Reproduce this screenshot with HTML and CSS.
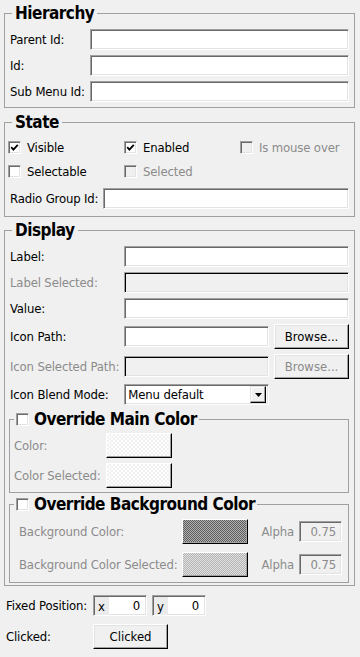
FILE: index.html
```html
<!DOCTYPE html>
<html lang="en">
<head>
    <meta charset="UTF-8">
    <meta name="viewport" content="width=device-width, initial-scale=1.0">
    <title>Menu Item Properties</title>
    <link rel="stylesheet" href="styles.css">
</head>
<body>
    <div class="panel">
        <fieldset class="group hierarchy">
            <legend>Hierarchy</legend>
            <div class="fields">
                <label>Parent Id:</label><input class="field" type="text">
                <label>Id:</label><input class="field" type="text">
                <label>Sub Menu Id:</label><input class="field" type="text">
            </div>
        </fieldset>

        <fieldset class="group state">
            <legend>State</legend>
            <div class="checks">
                <label class="check"><span class="box"><svg width="9" height="9" viewBox="0 0 9 9"><path d="M1.2 4.2 3.4 6.6 7.8 1.8" fill="none" stroke="#000" stroke-width="1.8"/></svg></span>Visible</label>
                <label class="check"><span class="box"><svg width="9" height="9" viewBox="0 0 9 9"><path d="M1.2 4.2 3.4 6.6 7.8 1.8" fill="none" stroke="#000" stroke-width="1.8"/></svg></span>Enabled</label>
                <label class="check dim"><span class="box off"></span>Is mouse over</label>
                <label class="check"><span class="box"></span>Selectable</label>
                <label class="check dim"><span class="box off"></span>Selected</label>
            </div>
            <div class="fields radio">
                <label>Radio Group Id:</label><input class="field" type="text">
            </div>
        </fieldset>

        <fieldset class="group display">
            <legend>Display</legend>
            <div class="fields display-fields">
                <label>Label:</label><input class="field wide" type="text">
                <label class="dim">Label Selected:</label><input class="field wide" type="text" disabled>
                <label>Value:</label><input class="field wide" type="text">
                <label>Icon Path:</label><input class="field" type="text"><button class="btn">Browse...</button>
                <label class="dim">Icon Selected Path:</label><input class="field" type="text" disabled><button class="btn" disabled>Browse...</button>
                <label>Icon Blend Mode:</label>
                <div class="select">
                    <span class="select-text">Menu default</span>
                    <span class="arrow"><svg width="7" height="4" viewBox="0 0 7 4"><path d="M0 0h7L3.5 4z" fill="#000"/></svg></span>
                </div>
            </div>

            <fieldset class="sub main-color">
                <legend><span class="box"></span>Override Main Color</legend>
                <div class="swatches">
                    <span class="dim">Color:</span><span class="swatch light"></span>
                    <span class="dim">Color Selected:</span><span class="swatch light"></span>
                </div>
            </fieldset>

            <fieldset class="sub bg-color">
                <legend><span class="box"></span>Override Background Color</legend>
                <div class="swatches alpha-rows">
                    <span class="dim">Background Color:</span><span class="swatch dark"></span>
                    <span class="dim">Alpha</span><span class="alpha">0.75</span>
                    <span class="dim">Background Color Selected:</span><span class="swatch mid"></span>
                    <span class="dim">Alpha</span><span class="alpha">0.75</span>
                </div>
            </fieldset>
        </fieldset>

        <div class="footer">
            <span>Fixed Position:</span>
            <div class="coords">
                <div class="coord"><span class="axis">x</span><span class="num">0</span></div>
                <div class="coord"><span class="axis">y</span><span class="num">0</span></div>
            </div>
            <span>Clicked:</span>
            <button class="btn">Clicked</button>
        </div>
    </div>
</body>
</html>
```

FILE: styles.css
```css
body {
    margin: 0;
    background: #f0f0f0;
    color: #000;
    font-family: "DejaVu Sans Condensed", "DejaVu Sans", sans-serif;
    font-size: 13px;
    letter-spacing: -0.15px;
}

.panel {
    width: 360px;
    padding-top: 4px;
    white-space: nowrap;
}

.group {
    margin: 0 5px 0 4px;
    padding: 0 5px 5px;
    border: 1px solid #a0a0a0;
    min-width: 0;
}

.group + .group {
    margin-top: 5px;
}

.group.display {
    margin-top: 4px;
    padding-bottom: 2px;
}

legend {
    display: flex;
    align-items: center;
    gap: 5px;
    margin-left: 2px;
    padding: 0 3px;
    font-size: 17px;
    font-weight: bold;
    line-height: 18px;
    letter-spacing: -0.5px;
}

.fields {
    display: grid;
    grid-template-columns: auto 1fr;
    column-gap: 5px;
    row-gap: 5px;
    align-items: center;
    padding-top: 7px;
}

.field {
    box-sizing: border-box;
    width: 100%;
    height: 21px;
    margin: 0;
    padding: 0 3px;
    border: 1px solid;
    border-color: #a0a0a0 #fff #fff #a0a0a0;
    box-shadow: inset 1px 1px #696969, inset -1px -1px #e3e3e3;
    background: #fff;
    font: inherit;
    outline: none;
}

.field:disabled {
    background: #f0f0f0;
    box-shadow: inset 1px 1px #000, inset -1px -1px #e3e3e3;
}

.dim {
    color: #8b8b8b;
}

/* state */
.state {
    padding-bottom: 7px;
}

.checks {
    display: grid;
    grid-template-columns: 116px 116px auto;
    grid-auto-rows: 22px;
    row-gap: 2px;
    align-items: center;
    margin-left: -2px;
    padding-top: 5px;
}

.check {
    display: flex;
    align-items: center;
    gap: 6px;
}

.box {
    box-sizing: border-box;
    display: flex;
    align-items: center;
    justify-content: center;
    width: 13px;
    height: 13px;
    flex: none;
    border: 1px solid;
    border-color: #a0a0a0 #fff #fff #a0a0a0;
    box-shadow: inset 1px 1px #696969, inset -1px -1px #e3e3e3;
    background: #fff;
}

.box.off {
    background: #f0f0f0;
}

.radio {
    padding-top: 6px;
}

/* display */
.display-fields {
    grid-template-columns: auto 1fr 75px;
}

.wide {
    grid-column: span 2;
}

.btn {
    box-sizing: border-box;
    width: 75px;
    height: 25px;
    margin: 0;
    padding: 0;
    border: 1px solid;
    border-color: #fff #000 #000 #fff;
    box-shadow: inset -1px -1px #a0a0a0, inset 1px 1px #e3e3e3;
    background: #f0f0f0;
    color: #000;
    font: inherit;
}

.btn:disabled {
    color: #8b8b8b;
}

.select {
    box-sizing: border-box;
    display: flex;
    align-items: center;
    height: 21px;
    padding: 2px 2px 2px 3px;
    border: 1px solid;
    border-color: #a0a0a0 #fff #fff #a0a0a0;
    box-shadow: inset 1px 1px #696969, inset -1px -1px #e3e3e3;
    background: #fff;
}

.select-text {
    flex: 1;
}

.arrow {
    box-sizing: border-box;
    display: flex;
    align-items: center;
    justify-content: center;
    width: 16px;
    height: 17px;
    border: 1px solid;
    border-color: #e3e3e3 #000 #000 #e3e3e3;
    box-shadow: inset -1px -1px #a0a0a0, inset 1px 1px #fff;
    background: #f0f0f0;
}

.sub {
    margin: 5px 0 0 -1px;
    padding: 0 4px 4px;
    border: 1px solid #a0a0a0;
    min-width: 0;
}

.sub legend {
    margin-left: 0;
    padding: 0 2px;
}

.swatches {
    display: grid;
    grid-template-columns: auto 66px;
    justify-content: start;
    align-items: center;
    column-gap: 5px;
    row-gap: 5px;
    padding-top: 5px;
}

.swatch {
    box-sizing: border-box;
    height: 25px;
    border: 1px solid;
    border-color: #fff #000 #000 #fff;
    box-shadow: inset -1px -1px #a0a0a0;
}

.swatch.light {
    background: repeating-conic-gradient(#f1f1f1 0 25%, #fdfdfd 0 50%) 0 0 / 4px 4px;
}

.swatch.dark {
    background: repeating-conic-gradient(#5a5a5a 0 25%, #b4b4b4 0 50%) 0 0 / 2px 2px;
}

.swatch.mid {
    background: repeating-conic-gradient(#b2b2b2 0 25%, #e2e2e2 0 50%) 0 0 / 2px 2px;
}

.sub.bg-color {
    margin-top: 2px;
    padding: 0 8px 5px 9px;
}

.sub.bg-color legend {
    margin-left: -5px;
}

.alpha-rows {
    grid-template-columns: auto 66px auto 43px;
    row-gap: 8px;
    padding-top: 6px;
}

.alpha-rows .dim:nth-child(3),
.alpha-rows .dim:nth-child(7) {
    margin-left: 8px;
}

.alpha {
    box-sizing: border-box;
    height: 21px;
    padding-right: 5px;
    border: 1px solid;
    border-color: #a0a0a0 #fff #fff #a0a0a0;
    box-shadow: inset 1px 1px #696969, inset -1px -1px #e3e3e3;
    color: #8b8b8b;
    line-height: 19px;
    text-align: right;
}

/* footer */
.footer {
    display: grid;
    grid-template-columns: 82px auto;
    justify-content: start;
    align-items: center;
    column-gap: 5px;
    row-gap: 8px;
    padding: 9px 0 0 6px;
}

.coords {
    display: flex;
    gap: 5px;
}

.coord {
    box-sizing: border-box;
    display: flex;
    width: 54px;
    height: 21px;
    border: 1px solid;
    border-color: #a0a0a0 #fff #fff #a0a0a0;
    box-shadow: inset 1px 1px #696969, inset -1px -1px #e3e3e3;
    background: #fff;
    line-height: 19px;
}

.axis {
    width: 11px;
    margin: 1px 0 0 1px;
    padding-left: 3px;
    background: #ebebeb;
}

.num {
    flex: 1;
    padding-right: 6px;
    text-align: right;
}
```
